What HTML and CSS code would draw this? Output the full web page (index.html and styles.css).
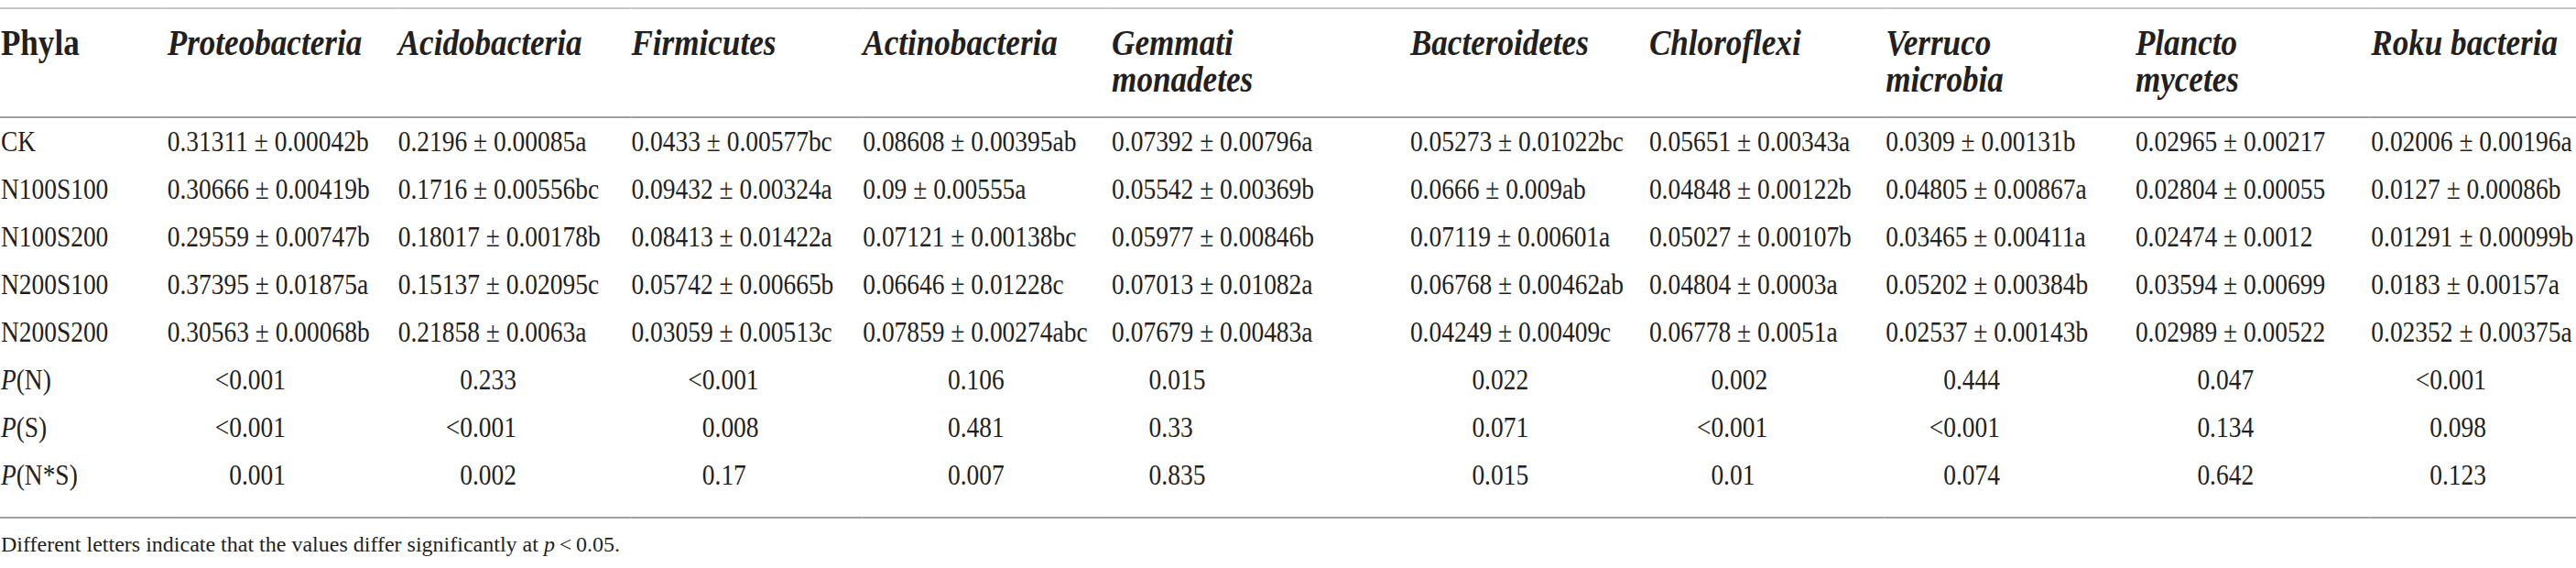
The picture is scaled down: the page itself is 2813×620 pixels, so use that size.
FILE: index.html
```html
<!DOCTYPE html>
<html lang="en">
<head>
    <meta charset="UTF-8">
    <title>Relative abundance of dominant phyla</title>
    <link rel="stylesheet" href="styles.css">
</head>
<body>
    <div class="sheet">
        <table class="phyla-table">
            <colgroup>
                <col class="c-label">
                <col class="c-prot">
                <col class="c-acid">
                <col class="c-firm">
                <col class="c-acti">
                <col class="c-gemm">
                <col class="c-bact">
                <col class="c-chlo">
                <col class="c-verr">
                <col class="c-plan">
                <col class="c-roku">
            </colgroup>
            <thead>
                <tr>
                    <th class="plain">Phyla</th>
                    <th>Proteobacteria</th>
                    <th>Acidobacteria</th>
                    <th>Firmicutes</th>
                    <th>Actinobacteria</th>
                    <th>Gemmati<br>monadetes</th>
                    <th>Bacteroidetes</th>
                    <th>Chloroflexi</th>
                    <th>Verruco<br>microbia</th>
                    <th>Plancto<br>mycetes</th>
                    <th>Roku bacteria</th>
                </tr>
            </thead>
            <tbody>
                <tr>
                    <td>CK</td>
                    <td>0.31311 ± 0.00042b</td>
                    <td>0.2196 ± 0.00085a</td>
                    <td>0.0433 ± 0.00577bc</td>
                    <td>0.08608 ± 0.00395ab</td>
                    <td>0.07392 ± 0.00796a</td>
                    <td>0.05273 ± 0.01022bc</td>
                    <td>0.05651 ± 0.00343a</td>
                    <td>0.0309 ± 0.00131b</td>
                    <td>0.02965 ± 0.00217</td>
                    <td>0.02006 ± 0.00196a</td>
                </tr>
                <tr>
                    <td>N100S100</td>
                    <td>0.30666 ± 0.00419b</td>
                    <td>0.1716 ± 0.00556bc</td>
                    <td>0.09432 ± 0.00324a</td>
                    <td>0.09 ± 0.00555a</td>
                    <td>0.05542 ± 0.00369b</td>
                    <td>0.0666 ± 0.009ab</td>
                    <td>0.04848 ± 0.00122b</td>
                    <td>0.04805 ± 0.00867a</td>
                    <td>0.02804 ± 0.00055</td>
                    <td>0.0127 ± 0.00086b</td>
                </tr>
                <tr>
                    <td>N100S200</td>
                    <td>0.29559 ± 0.00747b</td>
                    <td>0.18017 ± 0.00178b</td>
                    <td>0.08413 ± 0.01422a</td>
                    <td>0.07121 ± 0.00138bc</td>
                    <td>0.05977 ± 0.00846b</td>
                    <td>0.07119 ± 0.00601a</td>
                    <td>0.05027 ± 0.00107b</td>
                    <td>0.03465 ± 0.00411a</td>
                    <td>0.02474 ± 0.0012</td>
                    <td>0.01291 ± 0.00099b</td>
                </tr>
                <tr>
                    <td>N200S100</td>
                    <td>0.37395 ± 0.01875a</td>
                    <td>0.15137 ± 0.02095c</td>
                    <td>0.05742 ± 0.00665b</td>
                    <td>0.06646 ± 0.01228c</td>
                    <td>0.07013 ± 0.01082a</td>
                    <td>0.06768 ± 0.00462ab</td>
                    <td>0.04804 ± 0.0003a</td>
                    <td>0.05202 ± 0.00384b</td>
                    <td>0.03594 ± 0.00699</td>
                    <td>0.0183 ± 0.00157a</td>
                </tr>
                <tr>
                    <td>N200S200</td>
                    <td>0.30563 ± 0.00068b</td>
                    <td>0.21858 ± 0.0063a</td>
                    <td>0.03059 ± 0.00513c</td>
                    <td>0.07859 ± 0.00274abc</td>
                    <td>0.07679 ± 0.00483a</td>
                    <td>0.04249 ± 0.00409c</td>
                    <td>0.06778 ± 0.0051a</td>
                    <td>0.02537 ± 0.00143b</td>
                    <td>0.02989 ± 0.00522</td>
                    <td>0.02352 ± 0.00375a</td>
                </tr>
                <tr class="p-row">
                    <td><i>P</i>(N)</td>
                    <td><span class="lt">&lt;</span>0.001</td>
                    <td>0.233</td>
                    <td><span class="lt">&lt;</span>0.001</td>
                    <td>0.106</td>
                    <td>0.015</td>
                    <td>0.022</td>
                    <td>0.002</td>
                    <td>0.444</td>
                    <td>0.047</td>
                    <td><span class="lt">&lt;</span>0.001</td>
                </tr>
                <tr class="p-row">
                    <td><i>P</i>(S)</td>
                    <td><span class="lt">&lt;</span>0.001</td>
                    <td><span class="lt">&lt;</span>0.001</td>
                    <td>0.008</td>
                    <td>0.481</td>
                    <td>0.33</td>
                    <td>0.071</td>
                    <td><span class="lt">&lt;</span>0.001</td>
                    <td><span class="lt">&lt;</span>0.001</td>
                    <td>0.134</td>
                    <td>0.098</td>
                </tr>
                <tr class="p-row">
                    <td><i>P</i>(N*S)</td>
                    <td>0.001</td>
                    <td>0.002</td>
                    <td>0.17</td>
                    <td>0.007</td>
                    <td>0.835</td>
                    <td>0.015</td>
                    <td>0.01</td>
                    <td>0.074</td>
                    <td>0.642</td>
                    <td>0.123</td>
                </tr>
            </tbody>
        </table>

        <p class="note">Different letters indicate that the values differ significantly at <i>p</i>&thinsp;&lt;&thinsp;0.05.</p>
    </div>
</body>
</html>
```

FILE: styles.css
```css
:root {
    --ink: #231f20;
    --rule-light: #c8c8c8;
    --rule: #a0a0a0;
}

* {
    margin: 0;
    padding: 0;
    box-sizing: border-box;
}

body {
    font-family: "Liberation Serif", "Times New Roman", serif;
    color: var(--ink);
    background: #fff;
    overflow: hidden;
}

.sheet {
    width: 2813px;
    overflow: hidden;
}

/* the source table is set in a condensed serif: lay it out wide, then squeeze */
.phyla-table {
    width: 3126px;
    margin-top: 8px;
    table-layout: fixed;
    border-collapse: collapse;
    border-top: 2px solid var(--rule-light);
    border-bottom: 2px solid var(--rule);
    transform: scaleX(0.9);
    transform-origin: left top;
}

.c-label { width: 202px; }
.c-prot  { width: 280px; }
.c-acid  { width: 283px; }
.c-firm  { width: 281px; }
.c-acti  { width: 302px; }
.c-gemm  { width: 362px; }
.c-bact  { width: 290px; }
.c-chlo  { width: 287px; }
.c-verr  { width: 303px; }
.c-plan  { width: 286px; }
.c-roku  { width: 250px; }

thead th {
    text-align: left;
    vertical-align: top;
    font-size: 39px;
    line-height: 40px;
    font-weight: bold;
    font-style: italic;
    padding: 17px 0 20px 1px;
    border-bottom: 2px solid var(--rule);
    white-space: nowrap;
}

thead th.plain {
    font-style: normal;
}

tbody td {
    font-size: 30.5px;
    line-height: 52px;
    vertical-align: middle;
    white-space: nowrap;
    padding-left: 1px;
}

tbody tr:last-child td {
    padding-bottom: 19px;
}

/* p-values sit in from the column edge, "<" hangs to the left */
.p-row td:nth-child(2),
.p-row td:nth-child(3),
.p-row td:nth-child(7),
.p-row td:nth-child(8),
.p-row td:nth-child(10) { padding-left: 76px; }
.p-row td:nth-child(4) { padding-left: 87px; }
.p-row td:nth-child(5) { padding-left: 104px; }
.p-row td:nth-child(6) { padding-left: 46px; }
.p-row td:nth-child(9) { padding-left: 71px; }
.p-row td:nth-child(11) { padding-left: 72px; }

.p-row td:first-child {
    padding-left: 1px;
}

.lt {
    margin-left: -0.564em;
}

.note {
    font-size: 24px;
    line-height: 30px;
    padding: 13px 0 0 1px;
}
```
